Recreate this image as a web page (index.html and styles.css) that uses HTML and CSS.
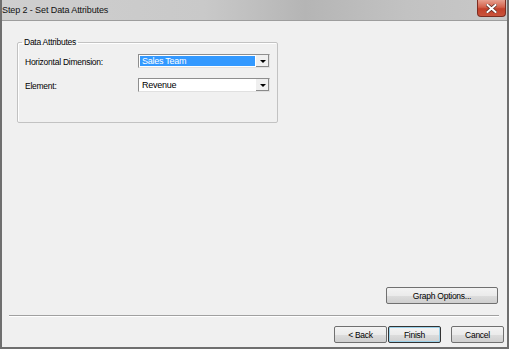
FILE: index.html
```
<!DOCTYPE html>
<html lang="en">
<head>
    <meta charset="UTF-8">
    <title>Step 2 - Set Data Attributes</title>
    <link rel="stylesheet" href="styles.css">
</head>
<body>
    <div class="window">
        <div class="titlebar">
            <span class="title">Step 2 - Set Data Attributes</span>
            <div class="close-btn">
                <svg width="11" height="9" viewBox="0 0 11 9">
                    <path d="M1.5 1 L9.5 8 M9.5 1 L1.5 8" stroke="#5a2a22" stroke-width="3.4" stroke-linecap="square"/>
                    <path d="M1.5 1 L9.5 8 M9.5 1 L1.5 8" stroke="#ffffff" stroke-width="2" stroke-linecap="square"/>
                </svg>
            </div>
        </div>

        <div class="client">
            <fieldset class="group">
                <legend>Data Attributes</legend>
                <div class="field-grid">
                    <label>Horizontal Dimension:</label>
                    <div class="combo selected">
                        <span class="combo-text">Sales Team</span>
                        <span class="combo-arrow"></span>
                    </div>
                    <label>Element:</label>
                    <div class="combo">
                        <span class="combo-text">Revenue</span>
                        <span class="combo-arrow"></span>
                    </div>
                </div>
            </fieldset>

            <div class="options-row">
                <button class="btn wide">Graph Options...</button>
            </div>

            <div class="separator"></div>

            <div class="footer">
                <button class="btn">&lt; Back</button>
                <button class="btn default">Finish</button>
                <button class="btn cancel">Cancel</button>
            </div>
        </div>
    </div>
</body>
</html>
```

FILE: styles.css
```
body, html {
    margin: 0;
    padding: 0;
    background: #f0f0f0;
    font-family: "Liberation Sans", Arial, sans-serif;
    color: #000;
}

.window {
    width: 509px;
    height: 349px;
    box-sizing: border-box;
    display: flex;
    flex-direction: column;
    border-left: 2px solid #6f6f6f;
    border-right: 2px solid #6f6f6f;
    border-bottom: 2px solid #6f6f6f;
    background: #f0f0f0;
}

.titlebar {
    height: 20px;
    display: flex;
    justify-content: space-between;
    align-items: flex-start;
    background: linear-gradient(90deg, #cfcfcf 0%, #c9c9c9 40%, #b5b5b5 60%, #c2c2c2 80%, #c8c8c8 100%);
    border-bottom: 1px solid #9d9d9d;
}

.title {
    font-size: 9px;
    letter-spacing: -0.1px;
    padding-top: 5px;
    color: #111;
}

.close-btn {
    width: 29px;
    height: 17px;
    margin-right: 1px;
    box-sizing: border-box;
    border: 1px solid #7d2c20;
    border-top: none;
    border-radius: 0 0 4px 4px;
    background: linear-gradient(#e7a08f 0%, #d4624c 45%, #c2402a 55%, #c9533b 100%);
    display: flex;
    align-items: center;
    justify-content: center;
}

.client {
    flex: 1;
    display: flex;
    flex-direction: column;
    padding: 16px 0 0 0;
    font-size: 8.5px;
    letter-spacing: -0.25px;
}

.group {
    margin: 0 0 0 15px;
    width: 261px;
    height: 86px;
    box-sizing: border-box;
    padding: 7px 0 0 7px;
    border: 1px solid #c2c2c2;
    border-radius: 2px;
    box-shadow: inset 1px 1px 0 #fff;
}

.group legend {
    padding: 0 2px;
    margin-left: -3px;
}

.field-grid {
    display: grid;
    grid-template-columns: 113px 132px;
    row-gap: 10px;
    align-items: center;
}

.field-grid label {
    padding-top: 2px;
}

.combo {
    height: 14px;
    box-sizing: border-box;
    display: flex;
    border: 1px solid #8e8e8e;
    border-right-color: #e0e0e0;
    border-bottom-color: #e0e0e0;
    background: #fff;
}

.combo-text {
    flex: 1;
    padding: 1px 0 0 3px;
    font-size: 9px;
    line-height: 11px;
}

.combo.selected .combo-text {
    background: #3399ff;
    color: #fff;
    margin: 1px 0 1px 1px;
    padding: 0 0 0 2px;
    line-height: 10px;
}

.combo-arrow {
    width: 13px;
    background: #efefef;
    border-left: 1px solid #fff;
    box-shadow: inset -1px -1px 0 #8a8a8a;
    position: relative;
}

.combo-arrow::after {
    content: "";
    position: absolute;
    left: 4px;
    top: 5px;
    border-left: 3px solid transparent;
    border-right: 3px solid transparent;
    border-top: 3px solid #000;
}

.options-row {
    display: flex;
    justify-content: flex-end;
    margin-top: 164px;
    padding-right: 9px;
}

.btn {
    font-family: "Liberation Sans", Arial, sans-serif;
    font-size: 8.5px;
    letter-spacing: -0.25px;
    height: 17px;
    padding: 0;
    box-sizing: border-box;
    border: 1px solid #707070;
    border-radius: 2px;
    background: linear-gradient(#f3f3f3 0%, #ebebeb 50%, #dddddd 51%, #cfcfcf 100%);
    color: #000;
}

.btn.wide {
    width: 112px;
}

.separator {
    margin: 11px 8px 0 7px;
    height: 1px;
    background: #a0a0a0;
    border-bottom: 1px solid #fff;
}

.footer {
    display: flex;
    justify-content: flex-end;
    gap: 1px;
    padding: 9px 3px 0 0;
}

.footer .btn {
    width: 53px;
}

.btn.default {
    border: 1px solid #333;
    box-shadow: inset 0 0 0 1px #9bd1ea;
}

.btn.cancel {
    margin-left: 9px;
}
```
